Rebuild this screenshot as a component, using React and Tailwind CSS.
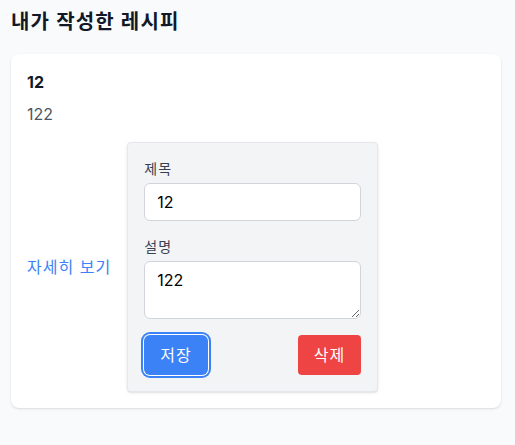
import React from "react";

const MyRecipes = () => {
  return (
    <div
      className="min-h-screen bg-[#f9fafb] pl-[11px] pr-[14px] pt-2 text-[#111827]"
      style={{ fontFamily: "Inter, 'Noto Sans CJK KR', sans-serif" }}
    >
      <h2 className="text-xl font-bold leading-7 tracking-[0.06em] mb-[18px]">내가 작성한 레시피</h2>

      {/* Recipe card */}
      <div className="bg-white rounded-lg shadow p-4">
        <h3 className="text-base font-bold leading-6 mb-2">12</h3>
        <p className="text-base text-[#4b5563] leading-6">122</p>

        <div className="mt-4 flex items-center gap-4">
          <a href="#" className="text-[#3b82f6] text-base tracking-[0.065em]">
            자세히 보기
          </a>

          {/* Edit form */}
          <div className="w-[251px] bg-[#f3f4f6] border border-[#e5e7eb] rounded shadow p-4">
            <label className="block text-sm text-[#374151] leading-5 tracking-[0.07em] mb-1">제목</label>
            <input
              defaultValue="12"
              className="block w-full h-[38px] px-3 bg-white border border-[#d1d5db] rounded-md text-base text-black leading-[normal] mb-4"
            />

            <label className="block text-sm text-[#374151] leading-5 tracking-[0.07em] mb-1">설명</label>
            <textarea
              defaultValue="122"
              rows={2}
              className="block w-full h-[58px] px-3 py-2 bg-white border border-[#d1d5db] rounded-md text-base text-black leading-[normal]"
            />

            <div className="mt-4 flex justify-between">
              <button className="h-10 px-4 bg-[#3b82f6] text-white text-base tracking-[0.065em] rounded-md ring-2 ring-[#3b82f6] ring-offset-1">
                저장
              </button>
              <button className="h-10 px-4 bg-[#ef4444] text-white text-base tracking-[0.065em] rounded">
                삭제
              </button>
            </div>
          </div>
        </div>
      </div>
    </div>
  );
};

export default MyRecipes;
